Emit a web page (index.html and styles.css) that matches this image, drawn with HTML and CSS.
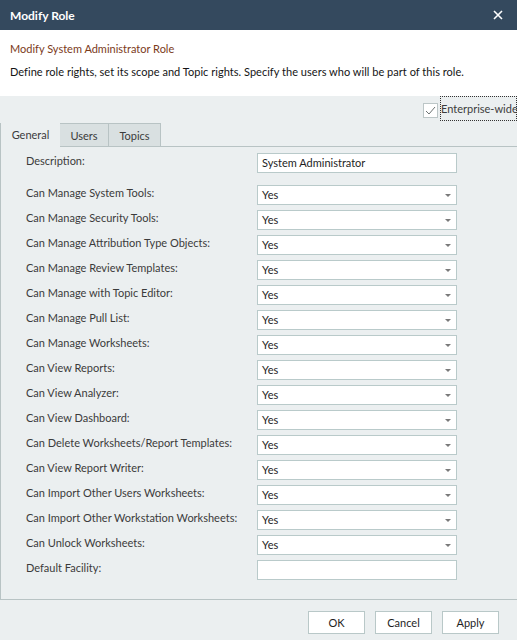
FILE: index.html
```html
<!DOCTYPE html>
<html>
<head>
<meta charset="utf-8">
<link rel="stylesheet" href="styles.css">
</head>
<body>
<div class="dialog">
  <div class="titlebar">
    <span class="title">Modify Role</span>
    <svg class="close" width="10" height="10" viewBox="0 0 10 10"><path d="M1 1 L9 9 M9 1 L1 9" stroke="#fff" stroke-width="1.6"/></svg>
  </div>
  <div class="header">
    <div class="subtitle">Modify System Administrator Role</div>
    <div class="desc">Define role rights, set its scope and Topic rights. Specify the users who will be part of this role.</div>
  </div>
  <div class="body">
    <div class="toprow">
      <span class="checkbox"><svg width="11" height="9" viewBox="0 0 11 9"><path d="M1 5 L4 8 L10 1" fill="none" stroke="#6d7373" stroke-width="1"/></svg></span>
      <span class="cblabel">Enterprise-wide</span>
    </div>
    <div class="tabs">
      <div class="tab active">General</div>
      <div class="tab">Users</div>
      <div class="tab">Topics</div>
      <div class="tabrest"></div>
    </div>
    <div class="panel">
      <div class="row first"><span class="label">Description:</span><span class="field text">System Administrator</span></div>
      <div class="row gap"><span class="label">Can Manage System Tools:</span><span class="field select">Yes<i class="arrow"></i></span></div>
      <div class="row"><span class="label">Can Manage Security Tools:</span><span class="field select">Yes<i class="arrow"></i></span></div>
      <div class="row"><span class="label">Can Manage Attribution Type Objects:</span><span class="field select">Yes<i class="arrow"></i></span></div>
      <div class="row"><span class="label">Can Manage Review Templates:</span><span class="field select">Yes<i class="arrow"></i></span></div>
      <div class="row"><span class="label">Can Manage with Topic Editor:</span><span class="field select">Yes<i class="arrow"></i></span></div>
      <div class="row"><span class="label">Can Manage Pull List:</span><span class="field select">Yes<i class="arrow"></i></span></div>
      <div class="row"><span class="label">Can Manage Worksheets:</span><span class="field select">Yes<i class="arrow"></i></span></div>
      <div class="row"><span class="label">Can View Reports:</span><span class="field select">Yes<i class="arrow"></i></span></div>
      <div class="row"><span class="label">Can View Analyzer:</span><span class="field select">Yes<i class="arrow"></i></span></div>
      <div class="row"><span class="label">Can View Dashboard:</span><span class="field select">Yes<i class="arrow"></i></span></div>
      <div class="row"><span class="label">Can Delete Worksheets/Report Templates:</span><span class="field select">Yes<i class="arrow"></i></span></div>
      <div class="row"><span class="label">Can View Report Writer:</span><span class="field select">Yes<i class="arrow"></i></span></div>
      <div class="row"><span class="label">Can Import Other Users Worksheets:</span><span class="field select">Yes<i class="arrow"></i></span></div>
      <div class="row"><span class="label">Can Import Other Workstation Worksheets:</span><span class="field select">Yes<i class="arrow"></i></span></div>
      <div class="row"><span class="label">Can Unlock Worksheets:</span><span class="field select">Yes<i class="arrow"></i></span></div>
      <div class="row"><span class="label">Default Facility:</span><span class="field text"></span></div>
    </div>
    <div class="footer">
      <button class="btn">OK</button>
      <button class="btn">Cancel</button>
      <button class="btn">Apply</button>
    </div>
  </div>
</div>
</body>
</html>
```
FILE: styles.css
```css
html, body {
  margin: 0;
  padding: 0;
}
body {
  width: 517px;
  height: 640px;
  overflow: hidden;
  font-family: "Lato", "Noto Sans", sans-serif;
  font-size: 11px;
  color: #1e1e1e;
  background: #ebeff0;
}
.dialog {
  display: flex;
  flex-direction: column;
  height: 640px;
}
.titlebar {
  height: 30px;
  background: #34495e;
  color: #fff;
  display: flex;
  align-items: center;
  justify-content: space-between;
  padding: 0 14px 0 10px;
  box-sizing: border-box;
}
.title {
  font-weight: bold;
  font-size: 12px;
}
.header {
  height: 66px;
  background: #fff;
  box-sizing: border-box;
  padding: 10px 10px 0 10px;
  white-space: nowrap;
}
.subtitle {
  color: #7b3a1a;
  line-height: 17px;
}
.desc {
  margin-top: 6px;
  line-height: 17px;
  color: #141414;
  letter-spacing: 0.03px;
}
.body {
  flex: 1;
  display: flex;
  flex-direction: column;
  background: #ebeff0;
}
.toprow {
  height: 27px;
  display: flex;
  justify-content: flex-end;
  align-items: flex-start;
}
.checkbox {
  width: 13px;
  height: 13px;
  margin-top: 7px;
  border: 1px solid #bcc6c7;
  background: #fff;
  display: flex;
  align-items: center;
  justify-content: center;
  margin-right: 2px;
}
.cblabel {
  height: 23px;
  line-height: 23px;
  border: 1px dotted #333;
  width: 75px;
  color: #3d3d3d;
  white-space: nowrap;
  text-align: right;
}
.tabs {
  display: flex;
  height: 24px;
  padding-left: 1px;
}
.tab {
  box-sizing: border-box;
  height: 24px;
  line-height: 23px;
  text-align: center;
  color: #3b3b3b;
  background: #d9e0e1;
  border: 1px solid #b8c3c4;
  border-left: none;
}
.tab:nth-child(1) { width: 59px; }
.tab:nth-child(2) { width: 49px; }
.tab:nth-child(3) { width: 52px; }
.tab.active {
  background: #ebeff0;
  border: none;
  border-left: 1px solid #b8c3c4;
  margin-left: -1px;
  width: 60px;
}
.tabrest {
  flex: 1;
  border-bottom: 1px solid #b8c3c4;
}
.panel {
  height: 453px;
  box-sizing: border-box;
  border-left: 1px solid #b8c3c4;
  border-bottom: 1px solid #b8c3c4;
  padding: 6px 0 0 25px;
}
.row {
  display: flex;
  align-items: flex-start;
  height: 20px;
  margin-top: 5px;
}
.row.first { margin-top: 0; }
.row.gap { margin-top: 12px; }
.label {
  width: 231px;
  color: #3b3b3b;
  line-height: 15px;
  white-space: nowrap;
}
.field {
  box-sizing: border-box;
  width: 200px;
  height: 20px;
  border: 1px solid #b9caca;
  background: #fff;
  line-height: 18px;
  padding-left: 4px;
  color: #1e1e1e;
  position: relative;
}
.arrow {
  position: absolute;
  right: 5px;
  top: 8px;
  width: 0;
  height: 0;
  border-left: 3px solid transparent;
  border-right: 3px solid transparent;
  border-top: 3px solid #7a7a7a;
}
.footer {
  display: flex;
  justify-content: flex-end;
  gap: 10px;
  padding: 11px 18px 0 0;
}
.btn {
  width: 57px;
  height: 23px;
  box-sizing: border-box;
  border: 1px solid #b9c8c8;
  background: #fff;
  font-family: inherit;
  font-size: 11px;
  color: #1e1e1e;
  padding: 0;
}
```
